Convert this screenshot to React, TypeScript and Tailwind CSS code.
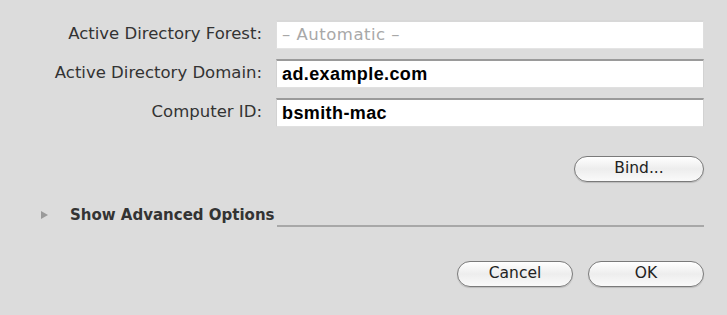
const labelFont = { fontFamily: '"DejaVu Sans", "Liberation Sans", sans-serif' };

function Field({ label, value, placeholder, disabled }: { label: string; value?: string; placeholder?: string; disabled?: boolean }) {
  return (
    <>
      <div className="flex items-center justify-end text-[16.5px] text-[#333]" style={labelFont}>
        {label}
      </div>
      <div
        className={
          "h-[29px] flex items-center pl-[5px] bg-white border-x border-b " +
          (disabled ? "border-t-2 border-t-[#d8d8d8] border-x-[#dedede] border-b-[#e4e4e4]" : "border-t-2 border-t-[#9a9a9a] border-x-[#d2d2d2] border-b-[#e0e0e0]")
        }
      >
        {value ? (
          <span className="text-[18px] font-semibold tracking-[0.4px] text-black [font-family:'Liberation_Sans',Arial,sans-serif]">{value}</span>
        ) : (
          <span className="text-[16.5px] tracking-[0.5px] text-[#a8a8a8]" style={labelFont}>{placeholder}</span>
        )}
      </div>
    </>
  );
}

function AquaButton({ children, width }: { children: React.ReactNode; width: string }) {
  return (
    <button
      className={
        width +
        " h-[26px] rounded-full border border-[#7a7a7a] bg-gradient-to-b from-white via-[#ededed] to-[#fafafa] shadow-[0_1px_1px_rgba(0,0,0,0.15)] text-[15.5px] text-[#222] flex items-center justify-center"
      }
      style={labelFont}
    >
      {children}
    </button>
  );
}

export default function App() {
  return (
    <div className="w-[727px] h-[315px] bg-[#dcdcdc] pt-[20px] pr-[23px] overflow-hidden">
      {/* Directory fields */}
      <div className="grid grid-cols-[262px_1fr] gap-x-[14px] gap-y-[10px]">
        <Field label="Active Directory Forest:" placeholder="– Automatic –" disabled />
        <Field label="Active Directory Domain:" value="ad.example.com" />
        <Field label="Computer ID:" value="bsmith-mac" />
      </div>

      {/* Bind */}
      <div className="flex justify-end mt-[29px]">
        <AquaButton width="w-[130px]">Bind...</AquaButton>
      </div>

      {/* Advanced options disclosure */}
      <div className="flex items-center h-[20px] mt-[23px] pl-[41px]">
        <svg width="7" height="8" viewBox="0 0 7 8" className="shrink-0">
          <path d="M0 0 L7 4 L0 8 Z" fill="#9a9a9a" />
        </svg>
        <span className="ml-[22px] text-[15px] font-semibold text-[#333] whitespace-nowrap" style={labelFont}>
          Show Advanced Options
        </span>
        <div className="flex-1 self-end mb-[-2px] ml-[2px] h-[2px] bg-[#a8a8a8]" />
      </div>

      {/* Dialog buttons */}
      <div className="flex justify-end gap-[15px] mt-[36px]">
        <AquaButton width="w-[116px]">Cancel</AquaButton>
        <AquaButton width="w-[116px]">OK</AquaButton>
      </div>
    </div>
  );
}
